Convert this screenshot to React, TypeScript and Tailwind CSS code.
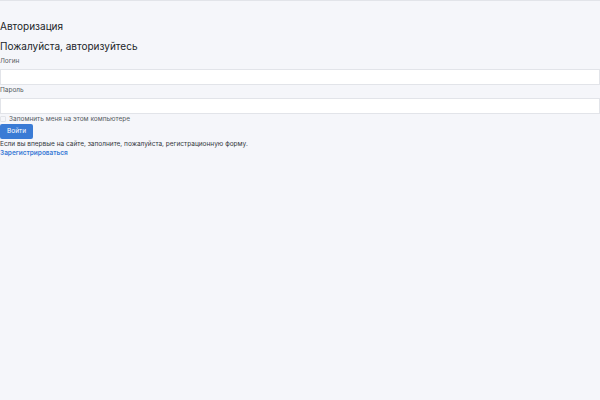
import React from "react";

export default function App() {
  return (
    <div
      className="w-[600px] h-[400px] bg-[#f5f6fa] border-t border-[#e2e4e9] overflow-hidden text-[#212529]"
      style={{ fontFamily: "Inter, 'Noto Sans', sans-serif" }}
    >
      <div className="pt-[19px]">
        <div className="text-[10px] leading-[12px]">Авторизация</div>
        <div className="mt-[8px] text-[10px] leading-[12px]">Пожалуйста, авторизуйтесь</div>
        <div className="mt-[5px] text-[6.5px] leading-[8px] text-[#555b61]">Логин</div>
        <div className="mt-[4px] h-[16px] bg-white border border-[#e2e4e9]"></div>
        <div className="mt-[1px] text-[6.5px] leading-[8px] text-[#555b61]">Пароль</div>
        <div className="mt-[4px] h-[16px] bg-white border border-[#e2e4e9]"></div>
        <div className="flex items-center h-[8px] mt-[1px]">
          <span className="w-[6px] h-[6px] mr-[3px] bg-[#f5f6fa] border border-[#e2e4e9] rounded-[1px]"></span>
          <span className="text-[6.5px] leading-[8px] text-[#555b61]">Запомнить меня на этом компьютере</span>
        </div>
        <div className="mt-[1px] flex">
          <div className="h-[15px] w-[33px] flex items-center justify-center bg-[#3a7bd5] text-white text-[6.5px] rounded-[2px]">
            Войти
          </div>
        </div>
        <div className="mt-[1px] text-[6.5px] leading-[8px] text-[#33373b]">
          Если вы впервые на сайте, заполните, пожалуйста, регистрационную форму.
        </div>
        <div className="mt-[1px] text-[6.5px] leading-[8px] font-semibold text-[#3a7bd5]">Зарегистрироваться</div>
      </div>
    </div>
  );
}
